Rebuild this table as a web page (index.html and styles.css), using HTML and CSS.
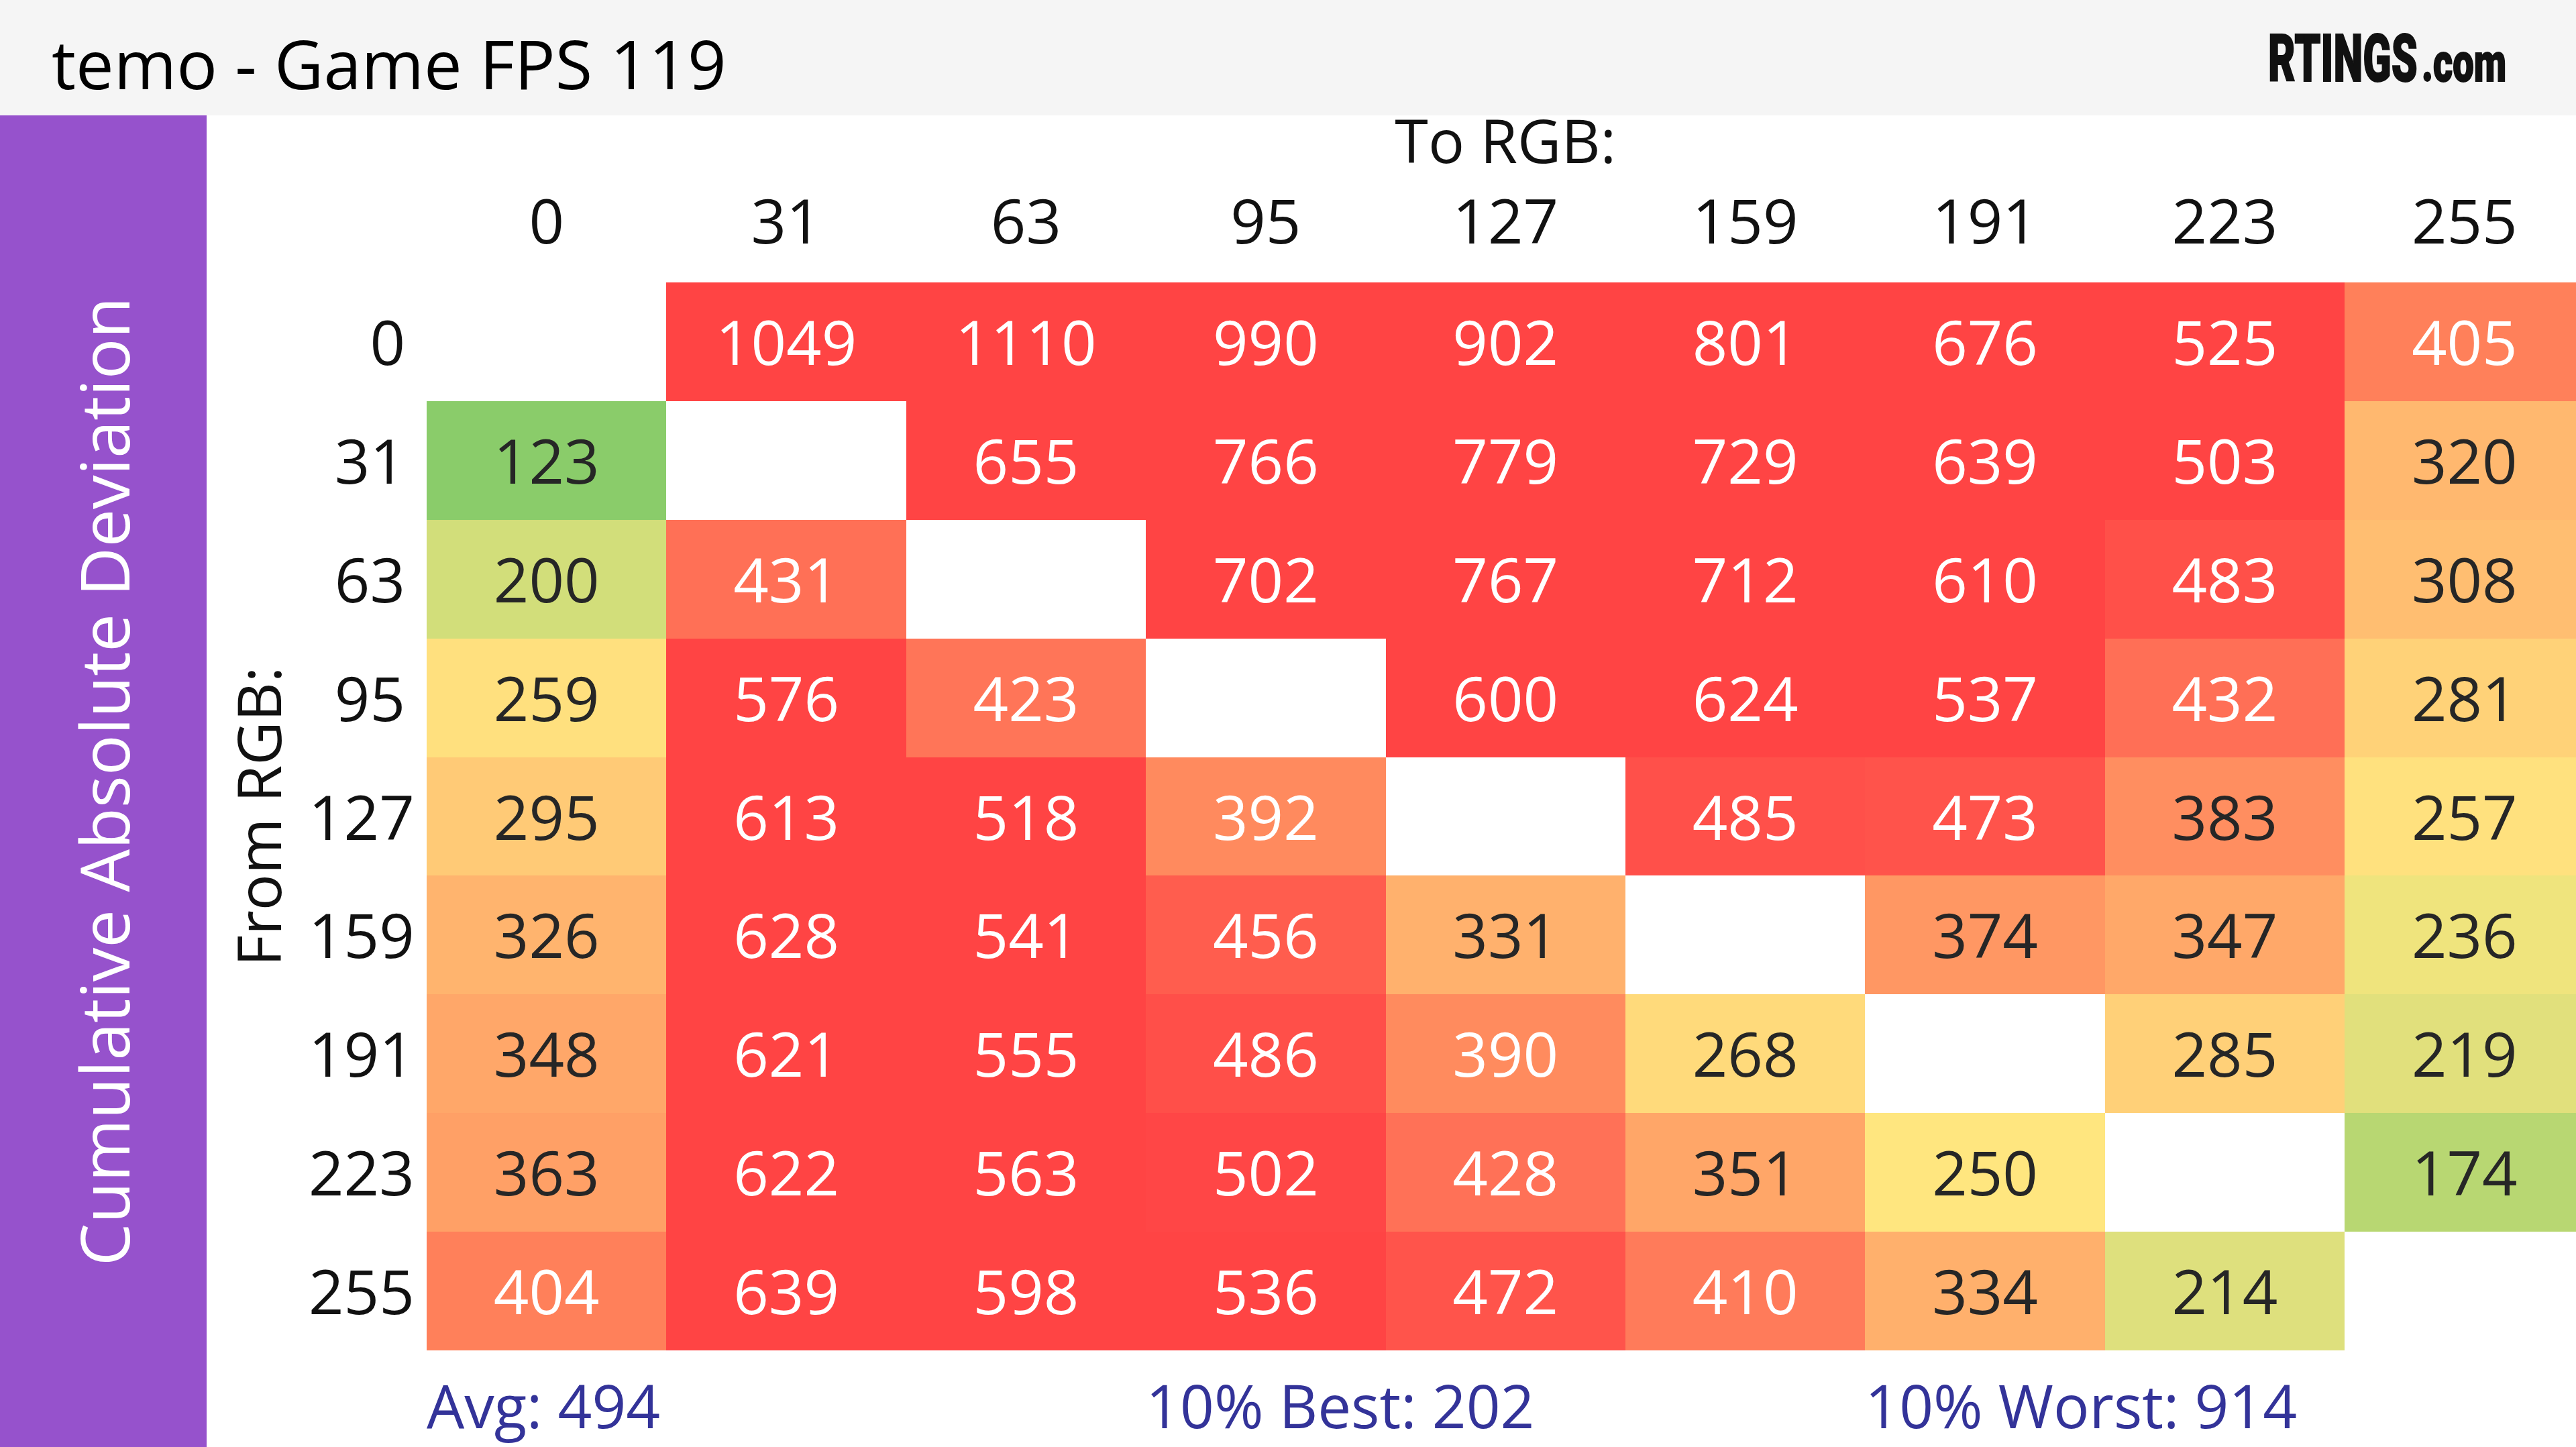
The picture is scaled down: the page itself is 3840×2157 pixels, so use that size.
FILE: index.html
```html
<!DOCTYPE html>
<html lang="en">
<head>
<meta charset="utf-8">
<title>temo - Game FPS 119</title>
<link rel="stylesheet" href="styles.css">
</head>
<body>
<header class="topbar">
  <h1 class="title">temo - Game FPS 119</h1>
  <svg class="logo" width="370" height="130" viewBox="0 0 548 130" preserveAspectRatio="none" aria-label="RTINGS.com">
    <text class="logo-main" x="3" y="100" textLength="330" lengthAdjust="spacingAndGlyphs">RTINGS</text>
    <text class="logo-dom" x="342" y="100" textLength="187" lengthAdjust="spacingAndGlyphs">.com</text>
  </svg>
</header>
<div class="body">
  <aside class="sidebar"><span class="sidebar-text">Cumulative Absolute Deviation</span></aside>
  <main class="plot">
    <div class="corner"></div>
    <div class="to-label">To RGB:</div>
    <div class="from-label"><span>From RGB:</span></div>
    <div class="colhead">0</div><div class="colhead">31</div><div class="colhead">63</div><div class="colhead">95</div><div class="colhead">127</div><div class="colhead">159</div><div class="colhead">191</div><div class="colhead">223</div><div class="colhead">255</div>

    <div class="rowhead">0</div>
    <div class="cell"></div>
    <div class="cell hot">1049</div><div class="cell hot">1110</div><div class="cell hot">990</div><div class="cell hot">902</div><div class="cell hot">801</div><div class="cell hot">676</div><div class="cell hot">525</div>
    <div class="cell w" style="background:#ff805a">405</div>

    <div class="rowhead">31</div>
    <div class="cell" style="background:#8acc6a">123</div>
    <div class="cell"></div>
    <div class="cell hot">655</div><div class="cell hot">766</div><div class="cell hot">779</div><div class="cell hot">729</div><div class="cell hot">639</div><div class="cell hot">503</div>
    <div class="cell" style="background:#ffb86f">320</div>

    <div class="rowhead">63</div>
    <div class="cell" style="background:#d2de7a">200</div>
    <div class="cell w" style="background:#ff7056">431</div>
    <div class="cell"></div>
    <div class="cell hot">702</div><div class="cell hot">767</div><div class="cell hot">712</div><div class="cell hot">610</div>
    <div class="cell w" style="background:#ff5049">483</div>
    <div class="cell" style="background:#ffbe71">308</div>

    <div class="rowhead">95</div>
    <div class="cell" style="background:#ffe07e">259</div>
    <div class="cell hot">576</div>
    <div class="cell w" style="background:#ff7558">423</div>
    <div class="cell"></div>
    <div class="cell hot">600</div><div class="cell hot">624</div><div class="cell hot">537</div>
    <div class="cell w" style="background:#ff6f56">432</div>
    <div class="cell" style="background:#ffd278">281</div>

    <div class="rowhead">127</div>
    <div class="cell" style="background:#ffca76">295</div>
    <div class="cell hot">613</div><div class="cell hot">518</div>
    <div class="cell w" style="background:#ff8a5e">392</div>
    <div class="cell"></div>
    <div class="cell w" style="background:#ff504a">485</div>
    <div class="cell w" style="background:#ff534b">473</div>
    <div class="cell" style="background:#ff8e60">383</div>
    <div class="cell" style="background:#ffe17e">257</div>

    <div class="rowhead">159</div>
    <div class="cell" style="background:#ffb46e">326</div>
    <div class="cell hot">628</div><div class="cell hot">541</div>
    <div class="cell w" style="background:#ff5d4e">456</div>
    <div class="cell" style="background:#ffb16d">331</div>
    <div class="cell"></div>
    <div class="cell" style="background:#ff9763">374</div>
    <div class="cell" style="background:#ffa869">347</div>
    <div class="cell" style="background:#efe47d">236</div>

    <div class="rowhead">191</div>
    <div class="cell" style="background:#ffa769">348</div>
    <div class="cell hot">621</div><div class="cell hot">555</div>
    <div class="cell w" style="background:#ff4f49">486</div>
    <div class="cell w" style="background:#ff8b5e">390</div>
    <div class="cell" style="background:#ffda7b">268</div>
    <div class="cell"></div>
    <div class="cell" style="background:#ffd078">285</div>
    <div class="cell" style="background:#e1e07c">219</div>

    <div class="rowhead">223</div>
    <div class="cell" style="background:#ffa066">363</div>
    <div class="cell hot">622</div><div class="cell hot">563</div>
    <div class="cell w" style="background:#ff4646">502</div>
    <div class="cell w" style="background:#ff7157">428</div>
    <div class="cell" style="background:#ffa668">351</div>
    <div class="cell" style="background:#ffe67f">250</div>
    <div class="cell"></div>
    <div class="cell" style="background:#b8d772">174</div>

    <div class="rowhead">255</div>
    <div class="cell w" style="background:#ff805a">404</div>
    <div class="cell hot">639</div><div class="cell hot">598</div><div class="cell hot">536</div>
    <div class="cell w" style="background:#ff544b">472</div>
    <div class="cell w" style="background:#ff7b5a">410</div>
    <div class="cell" style="background:#ffb06c">334</div>
    <div class="cell" style="background:#dee07d">214</div>
    <div class="cell"></div>

    <div class="stat stat-avg">Avg: 494</div>
    <div class="stat stat-best">10% Best: 202</div>
    <div class="stat stat-worst">10% Worst: 914</div>
  </main>
</div>
</body>
</html>
```
FILE: styles.css
```css
* { box-sizing: border-box; }
html, body { margin: 0; padding: 0; }
body {
  width: 3840px;
  height: 2157px;
  overflow: hidden;
  background: #ffffff;
  font-family: "Open Sans", "Noto Sans", sans-serif;
}

.topbar {
  height: 172px;
  background: #f5f5f5;
  display: flex;
  justify-content: space-between;
  align-items: flex-start;
}
.title {
  margin: 0;
  padding: 25px 0 0 77px;
  font-size: 101px;
  line-height: 138px;
  font-weight: 400;
  color: #000;
  white-space: nowrap;
}
.logo { margin: 21px 91px 0 0; display: block; }
.logo-main, .logo-dom {
  font-family: Roboto, "Liberation Sans", sans-serif;
  font-weight: 900;
  fill: #111;
  stroke: #111;
  stroke-width: 2px;
}
.logo-main { font-size: 98px; }
.logo-dom { font-size: 80px; }

.body { display: flex; height: 1985px; }
.sidebar {
  flex: 0 0 308px;
  background: #9652cc;
  display: flex;
  align-items: center;
  justify-content: center;
  overflow: hidden;
}
.sidebar-text {
  flex-shrink: 0;
  white-space: nowrap;
  color: #fff;
  font-size: 101px;
  line-height: 138px;
  transform: rotate(-90deg);
}

.plot {
  flex: 1;
  min-width: 0;
  display: grid;
  grid-template-columns: 152px 176px repeat(9, 357.4px);
  grid-template-rows: 70px 179px repeat(9, 176.9px) 144px;
  font-size: 92px;
}
.corner { grid-column: 1 / 3; grid-row: 1 / 3; }
.to-label {
  grid-column: 3 / -1;
  grid-row: 1;
  align-self: start;
  margin-top: -26px;
  text-align: center;
  font-size: 90px;
  line-height: 124px;
  color: #111;
  white-space: nowrap;
}
.colhead {
  text-align: center;
  line-height: 171px;
  color: #111;
}
.from-label {
  grid-column: 1;
  grid-row: 3 / span 9;
  display: flex;
  align-items: center;
  justify-content: center;
}
.from-label span {
  flex-shrink: 0;
  white-space: nowrap;
  font-size: 90px;
  line-height: 124px;
  color: #111;
  transform: rotate(-90deg);
}
.rowhead {
  text-align: right;
  padding-right: 32px;
  line-height: 176.9px;
  color: #111;
}
.cell {
  text-align: center;
  line-height: 176.9px;
  color: #262626;
}
.cell.hot { background: #ff4444; color: #fff; }
.cell.w { color: #fff; }

.stat {
  grid-row: 12;
  font-size: 89px;
  line-height: 144px;
  padding-top: 10px;
  color: #333399;
  white-space: nowrap;
}
.stat-avg { grid-column: 3 / span 3; }
.stat-best { grid-column: 6 / span 3; }
.stat-worst { grid-column: 9 / span 3; }
```
